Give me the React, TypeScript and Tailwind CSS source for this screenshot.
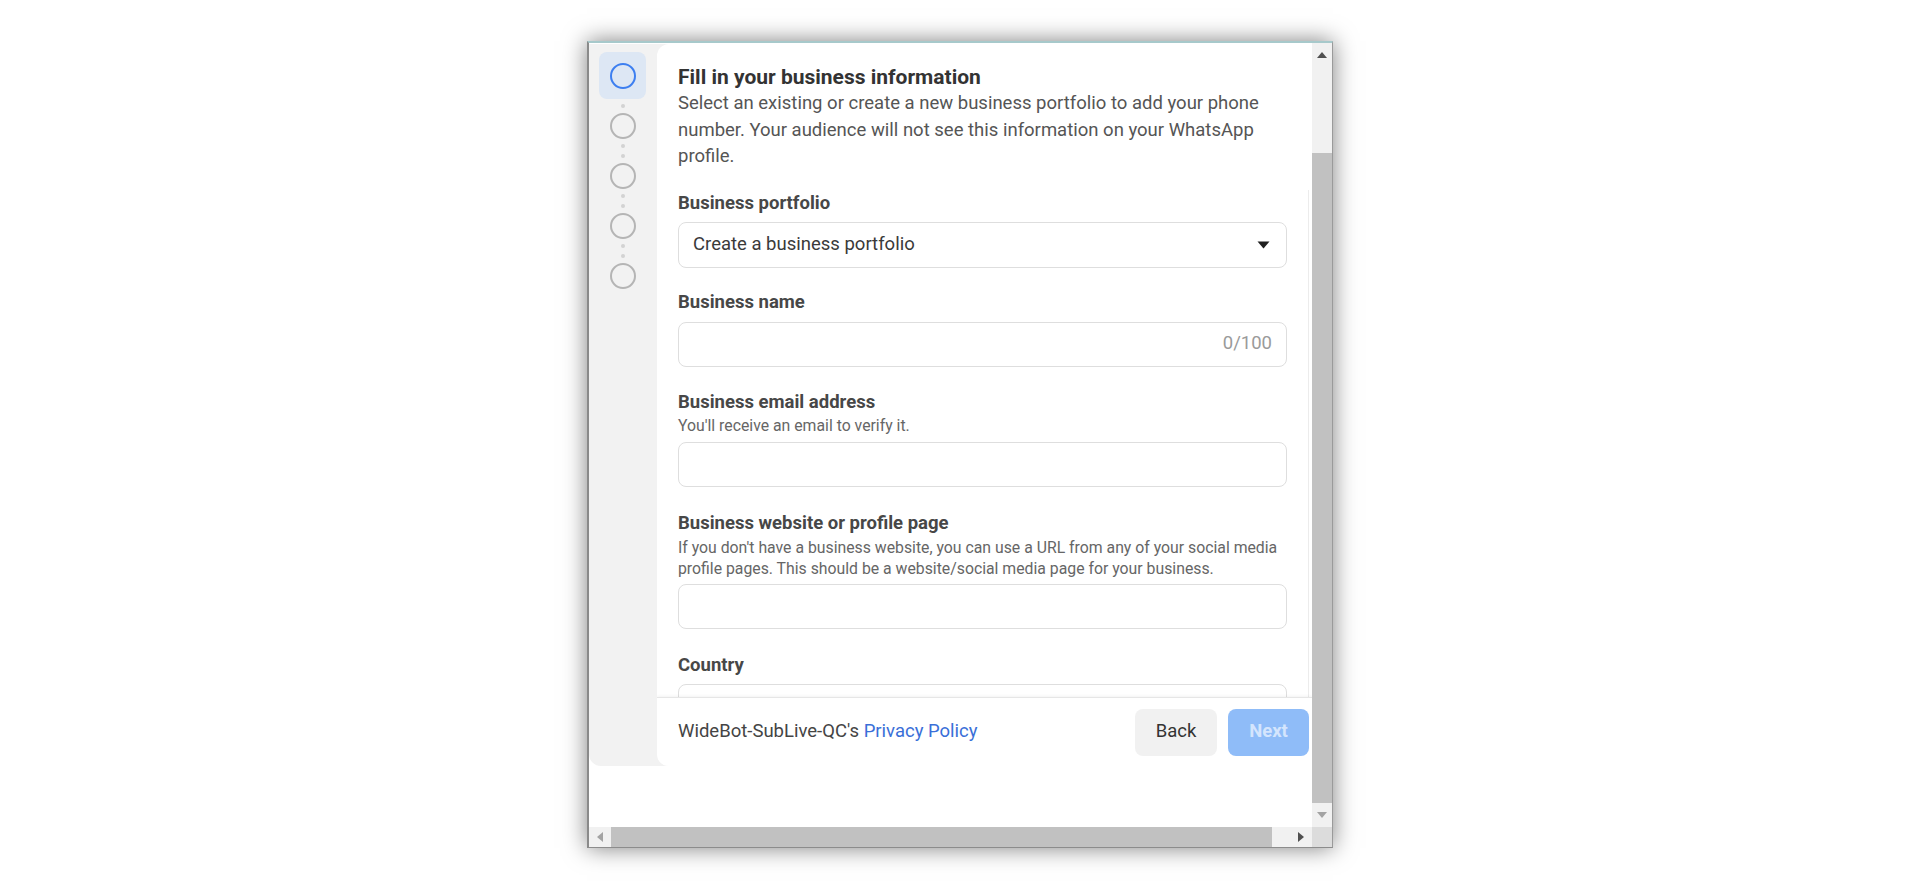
import React from "react";

function Circle({ active }: { active?: boolean }) {
  return (
    <div
      className={
        "relative z-10 h-[26px] w-[26px] rounded-full border-[2.5px] " +
        (active ? "border-[#3d7ff0]" : "border-[#b5b5b5]")
      }
    />
  );
}

function Dots() {
  return (
    <div className="flex h-[24px] flex-col items-center justify-center gap-[6px]">
      <div className="h-[4px] w-[4px] rounded-full bg-[#d3d3d3]" />
      <div className="h-[4px] w-[4px] rounded-full bg-[#d3d3d3]" />
    </div>
  );
}

function Label({ children }: { children: React.ReactNode }) {
  return <div className="text-[18.5px] font-bold leading-[22px] text-[#474747]">{children}</div>;
}

function Input({ children }: { children?: React.ReactNode }) {
  return (
    <div className="flex h-[45px] items-center rounded-[8px] border border-[#dedede] bg-white px-[14px] text-[18.5px]">
      {children}
    </div>
  );
}

export default function App() {
  return (
    <div
      className="h-[889px] w-full overflow-hidden bg-white pl-[587px] pt-[41px]"
      style={{ fontFamily: "Roboto, 'Noto Sans', Arial, sans-serif" }}
    >
      <div className="flex h-[807px] w-[746px] flex-col border-b border-l-2 border-r border-t-2 border-b-[#8c8c8c] border-l-[#8a8a8a] border-r-[#9a9a9a] border-t-[#a7c9cb] bg-white shadow-[0_0_22px_rgba(0,0,0,0.5)]">
        <div className="flex min-h-0 flex-1">
          {/* content */}
          <div className="flex min-w-0 flex-1 flex-col pt-[1px]">
            <div className="flex h-[722px] rounded-bl-[12px] bg-[#f2f2f2]">
              {/* steps */}
              <div className="relative flex w-[68px] flex-col items-center pt-[19px]">
                <div className="absolute left-[10px] top-[8px] h-[47px] w-[47px] rounded-[8px] bg-[#dde7f4]" />
                <Circle active />
                <Dots />
                <Circle />
                <Dots />
                <Circle />
                <Dots />
                <Circle />
                <Dots />
                <Circle />
              </div>
              {/* card */}
              <div className="relative flex min-w-0 flex-1 flex-col overflow-hidden rounded-l-[12px] bg-white">
                <div className="absolute bottom-0 right-[3px] top-[146px] w-px bg-[#ececec]" />
                <div className="min-h-0 flex-1 overflow-hidden pl-[21px] pr-[25px] pt-[20px]">
                  <div className="text-[21px] font-bold leading-[26px] text-[#333333]">
                    Fill in your business information
                  </div>
                  <div className="whitespace-nowrap text-[18.5px] leading-[26.5px] text-[#555555]">
                    Select an existing or create a new business portfolio to add your phone
                    <br />
                    number. Your audience will not see this information on your WhatsApp
                    <br />
                    profile.
                  </div>

                  <div className="mt-[22px]">
                    <Label>Business portfolio</Label>
                    <div className="mt-[8px] flex h-[46px] items-center justify-between rounded-[8px] border border-[#dedede] pl-[14px] pr-[16px]">
                      <span className="text-[18.5px] text-[#3a3a3a]">Create a business portfolio</span>
                      <svg width="13" height="8" viewBox="0 0 13 8">
                        <path d="M0.5 0.5 L12.5 0.5 L6.5 7.5 Z" fill="#1f1f1f" />
                      </svg>
                    </div>
                  </div>

                  <div className="mt-[23px]">
                    <Label>Business name</Label>
                    <div className="mt-[9px]">
                      <Input>
                        <span className="ml-auto text-[#9a9a9a]">0/100</span>
                      </Input>
                    </div>
                  </div>

                  <div className="mt-[24px]">
                    <Label>Business email address</Label>
                    <div className="mt-[3px] text-[15.8px] leading-[20px] text-[#666666]">
                      You'll receive an email to verify it.
                    </div>
                    <div className="mt-[6px]">
                      <Input />
                    </div>
                  </div>

                  <div className="mt-[25px]">
                    <Label>Business website or profile page</Label>
                    <div className="mt-[3px] whitespace-nowrap text-[15.8px] leading-[21px] text-[#666666]">
                      If you don't have a business website, you can use a URL from any of your social media
                      <br />
                      profile pages. This should be a website/social media page for your business.
                    </div>
                    <div className="mt-[5px]">
                      <Input />
                    </div>
                  </div>

                  <div className="mt-[25px]">
                    <Label>Country</Label>
                    <div className="mt-[8px]">
                      <Input />
                    </div>
                  </div>
                </div>
                {/* footer */}
                <div className="relative z-10 flex h-[69px] shrink-0 items-center justify-between border-t border-[#e6e6e6] bg-white pl-[21px] pr-[3px] shadow-[0_-1px_3px_rgba(0,0,0,0.05)]">
                  <div className="text-[18.5px] text-[#444444]">
                    WideBot-SubLive-QC's <span className="text-[#3a6fd8]">Privacy Policy</span>
                  </div>
                  <div className="flex gap-[11px]">
                    <button className="h-[47px] w-[82px] rounded-[8px] bg-[#f1f1f1] text-[18.5px] text-[#333333]">
                      Back
                    </button>
                    <button className="h-[47px] w-[81px] rounded-[8px] bg-[#8fbcf8] text-[18.5px] font-bold text-[#d4e5fd]">
                      Next
                    </button>
                  </div>
                </div>
              </div>
            </div>
          </div>
          {/* vertical scrollbar */}
          <div className="flex w-[20px] shrink-0 flex-col bg-[#f1f1f1]">
            <div className="flex h-[23px] items-center justify-center">
              <svg width="10" height="6" viewBox="0 0 10 6">
                <path d="M0 6 L10 6 L5 0 Z" fill="#505050" />
              </svg>
            </div>
            <div className="flex flex-1 flex-col">
              <div className="mt-[87px] flex-1 bg-[#c1c1c1]" />
            </div>
            <div className="flex h-[24px] items-center justify-center">
              <svg width="10" height="6" viewBox="0 0 10 6">
                <path d="M0 0 L10 0 L5 6 Z" fill="#a3a3a3" />
              </svg>
            </div>
          </div>
        </div>
        {/* horizontal scrollbar */}
        <div className="flex h-[20px] shrink-0">
          <div className="flex flex-1 bg-[#f1f1f1]">
            <div className="flex w-[22px] items-center justify-center">
              <svg width="6" height="10" viewBox="0 0 6 10">
                <path d="M6 0 L6 10 L0 5 Z" fill="#a3a3a3" />
              </svg>
            </div>
            <div className="w-[661px] bg-[#c1c1c1]" />
            <div className="flex-1" />
            <div className="flex w-[22px] items-center justify-center">
              <svg width="6" height="10" viewBox="0 0 6 10">
                <path d="M0 0 L0 10 L6 5 Z" fill="#505050" />
              </svg>
            </div>
          </div>
          <div className="w-[20px] bg-[#dcdcdc]" />
        </div>
      </div>
    </div>
  );
}
